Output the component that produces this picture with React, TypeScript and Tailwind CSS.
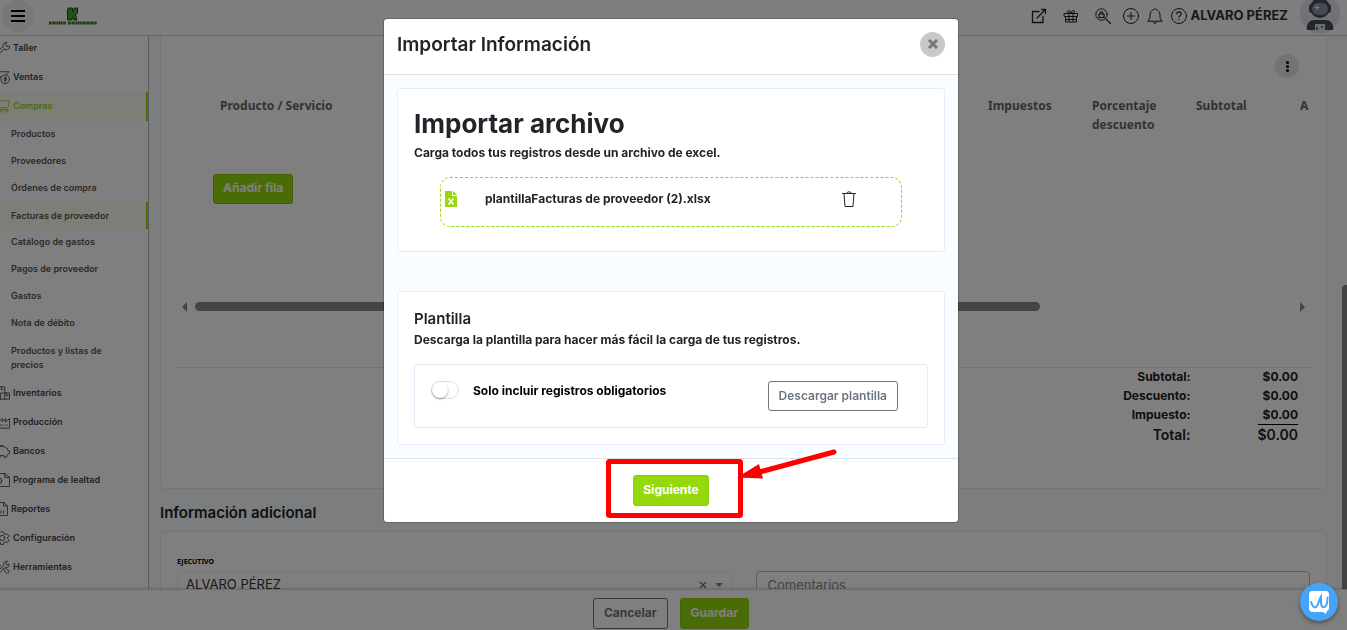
import React from 'react';

const fontSans = "font-['Inter','Liberation_Sans',sans-serif]";

type IconProps = { className?: string };

const Svg: React.FC<IconProps & { box?: string; children: React.ReactNode }> = ({ className, box = '0 0 16 16', children }) => (
    <svg viewBox={box} fill="none" stroke="currentColor" strokeLinecap="round" strokeLinejoin="round" className={className} aria-hidden="true">
        {children}
    </svg>
);

const menuIcons: Record<string, React.ReactNode> = {
    Taller: <path d="M1 11.500l6-4M3 15l6.500-6M8 7.500C7 4 9 1.500 12.500 1.500L11 4l1 2h3.500c.5 3-2.500 5-6 3.500" />,
    Ventas: <><path d="M1 2h14l-3 3M2 5l4 3" /><circle cx="10.500" cy="10.500" r="5" /><path d="M12 9c-1-1-3-.5-2.500.5s3 .5 2.500 1.800-2.500.7-3 0M10.500 7.500v6" /></>,
    Compras: <><path d="M0 2h15.500l-2 8H2M2 12h12" /><circle cx="5.500" cy="13.500" r="1.500" /><circle cx="12" cy="13.500" r="1.500" /></>,
    Inventarios: <><path d="M1 1h9v6M1 15h14.500V8H5v7M10 8v7M12 8v3h2M6 1v3h2" /></>,
    Producción: <><path d="M0 15h15.500V4l-4.500 4V4L7 8V4L3 8M5 11.500h1M8 11.500h1M12 11.500h1" /></>,
    Bancos: <><path d="M1 4c3-2 7-2 10 0l2 1v2l2.500 1v3l-2.500 1-1 3H9v-2H5v2H2v-4M3 2h5" /></>,
    'Programa de lealtad': <><path d="M1 .5h9l5.500 4.500v10.500H1M10 .5V5h5" /><circle cx="3" cy="9" r="3.500" /></>,
    Reportes: <><path d="M1 .5h10l4.500 4v11H1M11 .5v4h4M5 13V8M8 13v-3M11 13v-3" /></>,
    Configuración: <><circle cx="7" cy="8" r="3" /><path d="M5.500 1h3l.5 2 2 1 2-.5L15 6l-2 1.500v1L15 10.500l-2 2.500-2-.5-2 1-.5 2h-3L5 13l-2-1" /></>,
    Herramientas: <><path d="M2 13l7-7c-1-3 1-5 4-4.500L11 4l1 1.500 3-1c.5 3-2 4.500-4.500 4l-7 7M8 10l4 5c2 0 3.500-1 3-2.500L10.500 9M1 2l5 5" /></>,
};

const IconExternal = ({ className }: IconProps) => (
    <Svg className={className}><path d="M8 3.500H1.500v11H12V8.500M10.500 1.500h4v4M14.500 1.500L6 10" strokeWidth="1.300" /></Svg>
);

const IconGift = ({ className }: IconProps) => (
    <Svg className={className}><path d="M1.500 5.500h13v3h-13zM2.500 8.500v5.500h11V8.500M6 5.500v8M10 5.500v8M3 11.500h10M8 5C5 5 3.500 4.500 4.500 3S8 3.500 8 5c0-1.500 2.500-3.500 3.500-2S11 5 8 5z" /></Svg>
);

const IconSearchLock = ({ className }: IconProps) => (
    <Svg className={className}>
        <circle cx="6.500" cy="6.500" r="5.700" />
        <path d="M10.800 10.800l4.700 4.700M4 6h5v3.500H4zM5 6c0-3 3-3 3 0" strokeWidth="1.200" />
    </Svg>
);

const IconPlus = ({ className }: IconProps) => (
    <Svg className={className}><circle cx="8" cy="8" r="7.500" /><path d="M8 4.500v7M4.500 8h7" /></Svg>
);

const IconBell = ({ className }: IconProps) => (
    <Svg className={className}><path d="M1 13c2-1.500 2-3 2-6 0-3 2-5 4-5.500 0-1 2-1 2 0 2 .5 4 2.500 4 5.500 0 3 0 4.500 2 6zM6.500 14.500c.5 1.300 2.500 1.300 3 0" /></Svg>
);

const IconHelp = ({ className }: IconProps) => (
    <Svg className={className}><circle cx="8" cy="8" r="7.500" /><path d="M5.800 6c.2-3 4.800-2.500 4.500 0-.2 1.500-2.300 1.500-2.300 3.200M8 11.500v.2" strokeWidth="1.200" /></Svg>
);

const IconTrash = ({ className }: IconProps) => (
    <Svg className={className} box="0 0 14 16"><path d="M.5 2.500h13M2 2.500l1 13h8l1-13M4.500 2.500c0-2.300 5-2.300 5 0" /></Svg>
);

const Avatar = () => (
    <svg viewBox="0 0 40 40" className="size-10 shrink-0" aria-hidden="true">
        <circle cx="20" cy="20" r="20" fill="#e2e5ea" />
        <path d="M7 36c-1-7 3-10 8-10h10c5 0 9 3 8 10z" fill="#464c58" />
        <rect x="9" y="10" width="22" height="9" rx="3" fill="#464c58" />
        <circle cx="20" cy="14" r="10" fill="#464c58" />
        <rect x="12" y="9" width="16" height="12" rx="6" fill="#8b93a1" />
        <path d="M17 11v5M14.500 13.500h5" stroke="#fff" />
        <path d="M15 36v-6h10v6z" fill="#d5d9e0" />
        <path d="M17 33v3M22 32v2" stroke="#464c58" strokeWidth="1.500" />
    </svg>
);

const Logo = () => (
    <svg viewBox="0 0 50 20" className="h-5 w-[50px]" aria-hidden="true">
        <path d="M20.500 2h4v4l2-4h3v5l-2 2 1.500 5h-3.500l-1-3-1 3h-4V4z" fill="#46a52e" stroke="#1d4a1a" />
        <path d="M1 17h17M20 17h29" stroke="#3a6e1c" strokeWidth="3" strokeDasharray="2 .4 1 .4" />
    </svg>
);

const Header: React.FC = () => (
    <header className="flex h-9 shrink-0 items-center justify-between border-b border-[#c8c8c8] bg-[#fdfdfd] pr-[7px] text-[#222]">
        <div className="flex items-center gap-3.5 pb-1 pl-0.5">
            <button aria-label="Menú" className="flex size-8 flex-col items-center justify-center gap-[3px] rounded-full bg-[#efefef]">
                <span className="h-0.5 w-3.5 bg-black"></span>
                <span className="h-0.5 w-3.5 bg-black"></span>
                <span className="h-0.5 w-3.5 bg-black"></span>
            </button>
            <Logo />
        </div>
        <div className="flex h-9 items-center pb-1">
            <button aria-label="Abrir" className="mr-4"><IconExternal className="size-4" /></button>
            <button aria-label="Regalos" className="mr-4"><IconGift className="size-4" /></button>
            <button aria-label="Buscar" className="mr-3"><IconSearchLock className="size-4" /></button>
            <button aria-label="Agregar" className="mr-2"><IconPlus className="size-4" /></button>
            <button aria-label="Notificaciones" className="mr-2"><IconBell className="size-4" /></button>
            <button aria-label="Ayuda" className="mr-1"><IconHelp className="size-4" /></button>
            <span className="mr-3 text-[13px] font-bold text-[#333]">ALVARO PÉREZ</span>
            <div className="mb-1"><Avatar /></div>
        </div>
    </header>
);

const subItems = [
    'Productos',
    'Proveedores',
    'Órdenes de compra',
    'Facturas de proveedor',
    'Catálogo de gastos',
    'Pagos de proveedor',
    'Gastos',
    'Nota de débito',
    'Productos y listas de precios',
];

const MenuItem: React.FC<{ label: string; active?: boolean }> = ({ label, active }) => (
    <li>
        <a
            href="#"
            className={`flex h-[29px] items-center gap-[3px] pb-px whitespace-nowrap ${active ? 'border-r-2 border-[#95d90c] bg-[#fbfcee] text-[#95d90c]' : 'text-[#444]'}`}
        >
            <Svg className={`size-3.5 shrink-0 ${label === 'Reportes' ? '-ml-1.5' : '-ml-1'}`}>{menuIcons[label]}</Svg>
            {label}
        </a>
    </li>
);

const Sidebar: React.FC = () => (
    <nav className="w-[149px] shrink-0 overflow-hidden border-r border-[#bbb] bg-white text-[9px] font-semibold">
        <ul className="-mt-0.5">
            <MenuItem label="Taller" />
            <MenuItem label="Ventas" />
            <MenuItem label="Compras" active />
            {subItems.map((item) => (
                <li key={item}>
                    <a
                        href="#"
                        className={`flex items-center pl-[11px] leading-[14px] text-[#555] ${item === 'Facturas de proveedor' ? 'h-[27px] border-r-2 border-[#95d90c] bg-[#fbfcee]' : item.length > 25 ? 'py-[7px] pr-10' : 'h-[27px] pb-0.5'}`}
                    >
                        {item}
                    </a>
                </li>
            ))}
            {['Inventarios', 'Producción', 'Bancos', 'Programa de lealtad', 'Reportes', 'Configuración', 'Herramientas'].map((item) => (
                <MenuItem key={item} label={item} />
            ))}
        </ul>
    </nav>
);

const totals = [
    ['Subtotal:', '$0.00'],
    ['Descuento:', '$0.00'],
    ['Impuesto:', '$0.00'],
];

const Invoice: React.FC = () => (
    <section className="flex h-[453px] shrink-0 flex-col rounded-b border border-t-0 border-[#e3eef8] bg-white px-4">
        <div className="flex justify-end pt-[18px] pr-[11px]">
            <button aria-label="Más opciones" className="flex size-6 flex-col items-center justify-center gap-px rounded-full bg-[#e6e6e6]">
                <span className="size-[3px] rounded-full bg-black"></span>
                <span className="size-[3px] rounded-full bg-black"></span>
                <span className="size-[3px] rounded-full bg-black"></span>
            </button>
        </div>

        <div className="h-56 overflow-hidden pt-[18px]">
            <table className="w-full table-fixed font-['Noto_Sans','Liberation_Sans',sans-serif] text-xs leading-[19px] font-bold text-[#666]">
                <thead>
                    <tr className="text-left align-top">
                        <th className="pl-[43px]">Producto / Servicio</th>
                        <th className="w-[104px]">Impuestos</th>
                        <th className="w-[104px]">Porcentaje descuento</th>
                        <th className="w-[104px]">Subtotal</th>
                        <th className="w-[10px]">A</th>
                    </tr>
                </thead>
            </table>
            <button className="mt-10 ml-9 h-[30px] rounded-[3px] border border-[#82c000] bg-[#95d90c] px-[9px] pb-0.5 text-xs font-bold text-white">Añadir fila</button>
        </div>

        <div className="flex h-[9px] items-center px-[5px]">
            <span className="border-y-[5px] border-r-[5px] border-y-transparent border-r-[#888]"></span>
            <div className="mx-2 h-full flex-1">
                <div className="h-full w-[77%] rounded-full bg-[#888]"></div>
            </div>
            <span className="border-y-[5px] border-l-[5px] border-y-transparent border-l-[#888]"></span>
        </div>

        <div className="mt-[56px] flex justify-end border-t border-[#e0e0e0] pr-3 text-xs font-bold text-[#222]">
            <table className="-mt-px text-right">
                <tbody className="leading-[19px]">
                    {totals.map(([label, value]) => (
                        <tr key={label}>
                            <th className="pr-[67px]">{label}</th>
                            <td>{value}</td>
                        </tr>
                    ))}
                    <tr className="text-sm leading-[19px] font-semibold">
                        <th className="pr-[67px] font-semibold">Total:</th>
                        <td className="border-t border-black">{'$0.00'}</td>
                    </tr>
                </tbody>
            </table>
        </div>
    </section>
);

const ExtraInfo: React.FC = () => (
    <>
        <h2 className="pt-4 pb-2.5 text-[15px] leading-4 font-semibold text-[#222]">Información adicional</h2>
        <section className="grid flex-1 grid-cols-2 gap-6 rounded-t border border-b-0 border-[#e3eef8] bg-white px-4 pt-6">
            <div>
                <label htmlFor="ejecutivo" className="block h-[15px] font-['Noto_Sans','Liberation_Sans',sans-serif] text-[7px] leading-3 font-bold text-black">EJECUTIVO</label>
                <div className="flex h-9 items-start rounded border border-[#ececec] pr-2 pt-1">
                    <select id="ejecutivo" className="h-4 flex-1 appearance-none bg-transparent pl-2 text-[13px] leading-4 text-[#333]">
                        <option>ALVARO PÉREZ</option>
                    </select>
                    <button aria-label="Quitar" className="size-3.5"><svg viewBox="0 0 14 14" className="size-3.5" stroke="#777" strokeWidth="1.500" aria-hidden="true"><path d="M5 6l6 6M11 6l-6 6" /></svg></button>
                    <span className="mt-[7px] ml-1.5 border-x-4 border-t-4 border-x-transparent border-t-[#888]"></span>
                </div>
            </div>
            <textarea aria-label="Comentarios" placeholder="Comentarios" className="mt-[15px] h-12 resize-none rounded border border-[#bbb] px-[11px] py-[3px] text-[13px] leading-5 placeholder:text-[#888]"></textarea>
        </section>
    </>
);

// Highlight box and arrow pointing at the next step button
const Highlight = () => (
    <svg viewBox="0 0 232 70" className="pointer-events-none absolute -top-[26px] -left-[27px] h-[70px] w-[232px]" aria-hidden="true">
        <rect x="2.500" y="12.500" width="132" height="54" rx="1" fill="none" stroke="#f00" strokeWidth="5" />
        <path d="M228 3L150 24" stroke="#f00" strokeWidth="5" strokeLinecap="round" />
        <path d="M131 28.500L153 15l4 14.500z" fill="#f00" />
    </svg>
);

const ImportModal: React.FC = () => (
    <div className="fixed inset-0 flex items-start justify-center bg-black/50 pt-[18px] pr-[5px]">
        <div role="dialog" aria-labelledby="modal-title" className="w-[576px] rounded border border-black/20 bg-white bg-clip-padding text-[#212529]">
            <div className="flex h-14 items-center justify-between border-b border-[#dee2e6] px-[13px] pb-1">
                <h5 id="modal-title" className="text-[19px] leading-6 font-semibold">Importar Información</h5>
                <button aria-label="Cerrar" className="flex size-[25px] items-center justify-center rounded-full bg-[#c8c9ca] pb-0.5 text-[#777]">
                    <svg viewBox="0 0 10 10" className="size-2.5" stroke="currentColor" strokeWidth="3" aria-hidden="true"><path d="M1 1l8 8M9 1L1 9" /></svg>
                </button>
            </div>

            <div className="bg-[#f9fdff] p-[13px]">
                <div className="rounded-[3px] border border-[#e3eefa] bg-white px-4 pt-4 pb-6">
                    <h1 className="text-[26px] leading-[38px] font-bold">Importar archivo</h1>
                    <p className="text-xs leading-5 font-bold">Carga todos tus registros desde un archivo de excel.</p>
                    <div className="mx-[26px] mt-3.5 flex h-[50px] items-center rounded-[10px] border border-dashed border-[#95d90c] pr-[45px] pb-1.5 pl-1">
                        <svg viewBox="0 0 12 16" className="h-4 w-3" aria-hidden="true">
                            <path d="M0 0h7v5h5v11H0z" fill="#95d90c" />
                            <path d="M8 0l4 4H8z" fill="#95d90c" />
                            <path d="M3.500 7.500l5 6M8.500 7.500l-5 6" stroke="#fff" strokeWidth="1.600" />
                        </svg>
                        <span className="ml-7 flex-1 text-xs font-bold">plantillaFacturas de proveedor (2).xlsx</span>
                        <button aria-label="Eliminar archivo"><IconTrash className="h-4 w-3.5" /></button>
                    </div>
                </div>

                <div className="mt-[39px] rounded-[3px] border border-[#e3eefa] bg-white p-4">
                    <h4 className="text-[15px] leading-[22px] font-semibold">Plantilla</h4>
                    <p className="text-xs leading-5 font-bold">Descarga la plantilla para hacer más fácil la carga de tus registros.</p>
                    <div className="mt-3.5 flex h-16 items-start rounded-[3px] border border-[#e3eefa] pt-4 pr-[29px] pl-4">
                        <label className="flex flex-1 items-start text-xs leading-5 font-bold text-black">
                            <input type="checkbox" className="peer sr-only" />
                            <span className="mr-3.5 flex h-[18px] w-7 rounded-full border border-[#dfdfdf] bg-white peer-checked:justify-end">
                                <span className="size-4 rounded-full bg-white shadow-[0_1px_2px_rgba(0,0,0,0.4)]"></span>
                            </span>
                            Solo incluir registros obligatorios
                        </label>
                        <button className="h-[30px] rounded-[3px] border border-[#6c757d] px-2.5 text-xs font-semibold text-[#6c757d]">Descargar plantilla</button>
                    </div>
                </div>
            </div>

            <div className="flex h-16 items-center justify-center border-t border-[#dee2e6]">
                <div className="relative">
                    <button className="h-[31px] rounded-[3px] border border-[#8ccc0a] bg-[#95d90c] px-[9px] pb-0.5 text-xs font-bold text-white">Siguiente</button>
                    <Highlight />
                </div>
            </div>
        </div>
    </div>
);

export default function App() {
    return (
        <div className={`flex h-screen flex-col overflow-hidden bg-[#f8fbff] ${fontSans}`}>
            <Header />
            <div className="flex min-h-0 flex-1">
                <Sidebar />
                <main className="flex min-w-0 flex-1 flex-col overflow-hidden pr-[15px] pl-[11px]">
                    <Invoice />
                    <ExtraInfo />
                </main>
                <div className="flex w-[5px] flex-col justify-end">
                    <div className="h-[55%] rounded-tl bg-[#888]"></div>
                </div>
            </div>
            <footer className="relative flex h-[41px] shrink-0 justify-center gap-3 border-t border-[#d8d8d8] bg-white pt-2 pr-[5px] shadow-[0_-1px_3px_rgba(0,0,0,0.15)]">
                <button className="h-[31px] rounded-[3px] border border-[#6c757d] px-2.5 pb-0.5 text-xs font-bold text-[#6c757d]">Cancelar</button>
                <button className="h-[31px] rounded-[3px] border border-[#8ccc0a] bg-[#95d90c] px-2.5 pb-0.5 text-xs font-bold text-white">Guardar</button>
            </footer>

            <ImportModal />

            <button aria-label="Ayuda en línea" className="fixed right-[9px] bottom-[9px] flex size-[38px] items-center justify-center rounded-full bg-[#45a4f5] shadow-[0_2px_4px_rgba(0,0,0,0.4)]">
                <svg viewBox="0 0 22 24" className="h-6 w-[22px]" fill="none" aria-hidden="true">
                    <path d="M4 1h14q3 0 3 4v13q0 2-2 3l-1 3-3-2H5q-4 0-4-4V5q0-4 3-4z" fill="#fff" />
                    <path d="M3 12c1 3 2 5.500 4 5.500 3 0 4-8 6-11v6c0 7 6.500 7 6.500-5" stroke="#45a4f5" strokeWidth="2" strokeLinecap="round" />
                </svg>
            </button>
        </div>
    );
}
